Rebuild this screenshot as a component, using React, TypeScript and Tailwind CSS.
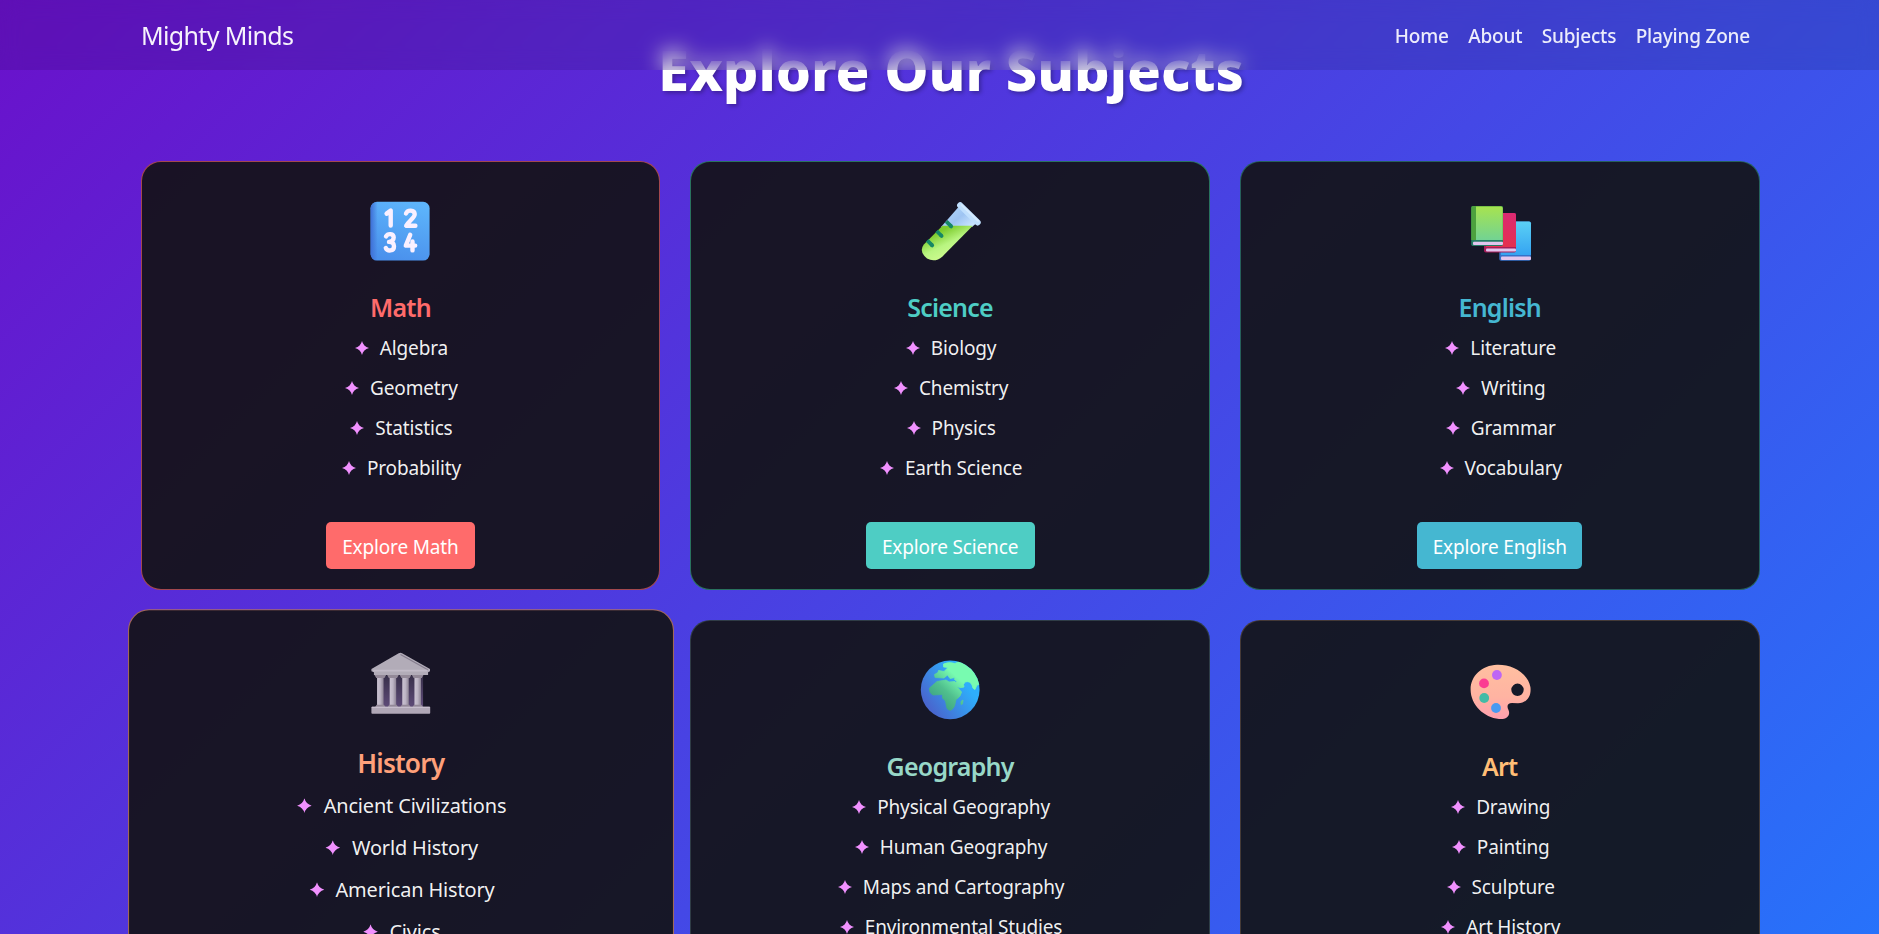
import React from "react";

const card = "rounded-[20px]";

function MathIcon() {
  return (
    <svg viewBox="0 0 60 60" className="h-[60px] w-[60px]">
      <defs>
        <linearGradient id="m1" x1="0.6" y1="0" x2="0.35" y2="1">
          <stop offset="0" stopColor="#5db4fb" />
          <stop offset="1" stopColor="#4a90ec" />
        </linearGradient>
        <linearGradient id="m2" x1="0" y1="0" x2="1" y2="0">
          <stop offset="0" stopColor="#3f6fd6" />
          <stop offset="0.12" stopColor="#3f6fd6" stopOpacity="0" />
        </linearGradient>
      </defs>
      <rect x="0.6" y="0.8" width="59" height="58.8" rx="6.5" fill="url(#m1)" />
      <rect x="0.6" y="0.8" width="59" height="58.8" rx="6.5" fill="url(#m2)" />
      <g fill="none" stroke="#faf0ff" strokeWidth="4.4" strokeLinecap="round" strokeLinejoin="round">
        <path d="M16.6 12.6 L20.7 9.6 V24.6" />
        <path d="M36 12.5 C37.5 8.6 44.5 8.6 44.7 13.2 C44.8 17 38.5 20 36.2 24.7 H45.4" />
        <path d="M16 35.4 C18 31.9 23.7 32.6 23.7 36.6 C23.7 39.6 21.5 40.9 19 40.9 C22 40.9 24 42.2 24 45.2 C24 50.4 17.5 50.6 15.8 47" />
        <path d="M40.2 33.8 L35.8 44.6 H45.2 M42.5 40.5 V49.4" />
      </g>
    </svg>
  );
}

function ScienceIcon() {
  return (
    <svg viewBox="0 0 60 60" className="h-[60px] w-[60px] overflow-visible">
      <defs>
        <linearGradient id="s1" x1="0.3" y1="0.2" x2="0.7" y2="0.75">
          <stop offset="0" stopColor="#7ccb2c" />
          <stop offset="0.55" stopColor="#b9f581" />
          <stop offset="1" stopColor="#cdfb8e" />
        </linearGradient>
        <linearGradient id="s2" x1="0" y1="0" x2="1" y2="0.7">
          <stop offset="0" stopColor="#b5dcff" />
          <stop offset="0.6" stopColor="#9ec4f2" />
          <stop offset="1" stopColor="#c6e3ff" />
        </linearGradient>
      </defs>
      <path d="M38.5 6 L56 22.5 L52 26 H21 Z" fill="url(#s2)" />
      <path d="M22.5 24.8 H52.8 L22.5 55.4 Q15 62 7 57.5 Q-1.5 50.5 3.8 43.5 Z" fill="url(#s1)" />
      <path d="M40.2 4.4 L57.6 21.4" stroke="#bfdffd" strokeWidth="6.2" strokeLinecap="round" />
      <path d="M41.6 4 L58 19.8" stroke="#d4eaff" strokeWidth="2" strokeLinecap="round" />
      <g stroke="#168765" strokeWidth="3.8">
        <path d="M26.2 20.4 L31.2 25.4 M16.6 30 L21.6 35 M7.2 39.4 L12.2 44.4" />
        <path d="M30.6 24.8 L31.2 25.4 M21 34.4 L21.6 35 M11.6 43.8 L12.2 44.4" strokeLinecap="round" />
      </g>
    </svg>
  );
}

function EnglishIcon() {
  return (
    <svg viewBox="0 0 60 60" className="h-[60px] w-[60px] overflow-visible">
      <defs>
        <linearGradient id="e1" x1="0" y1="0" x2="0" y2="1"><stop stopColor="#a7e34f" /><stop offset="1" stopColor="#72d393" /></linearGradient>
        <linearGradient id="e2" x1="0" y1="0" x2="0" y2="1"><stop stopColor="#db2a72" /><stop offset="1" stopColor="#e4304f" /></linearGradient>
        <linearGradient id="e3" x1="0" y1="0" x2="0" y2="1"><stop stopColor="#5bd0f5" /><stop offset="1" stopColor="#35a4f2" /></linearGradient>
      </defs>
      <rect x="29.3" y="20.4" width="31.6" height="39.4" rx="1.8" fill="#3671c9" />
      <path d="M31 20.4 H59 Q61 20.4 61 22.4 V54 H31 Z" fill="url(#e3)" />
      <rect x="31" y="55.6" width="30" height="3.4" rx="1" fill="#e2c5ee" />
      <rect x="14" y="12" width="32" height="39.6" rx="1.8" fill="#a51d59" />
      <path d="M16 12 H44 Q46 12 46 14 V46 H16 Z" fill="url(#e2)" />
      <rect x="16" y="47.4" width="30" height="3.2" rx="1" fill="#e2c5ee" />
      <rect x="1.2" y="5" width="31.8" height="40" rx="1.8" fill="#247b63" />
      <path d="M3 5 H31 Q33 5 33 7 V39 H1.2 V7 Q1.2 5 3 5" fill="#4da13e" />
      <path d="M6 5.4 H31 Q32.7 5.4 32.7 7.4 V39 H6 Z" fill="url(#e1)" />
      <rect x="3" y="40.8" width="30" height="3.2" rx="1" fill="#e2c5ee" />
    </svg>
  );
}

function HistoryIcon() {
  const columns = [7.2, 19.2, 31.2, 42.8];
  return (
    <svg viewBox="0 0 60 60" className="h-[60px] w-[60px]">
      <defs>
        <linearGradient id="h1" x1="0" y1="0" x2="1" y2="0"><stop stopColor="#cbc3d2" /><stop offset="0.5" stopColor="#bcb4c4" /><stop offset="1" stopColor="#8d8395" /></linearGradient>
        <linearGradient id="h2" x1="0" y1="0" x2="0" y2="1"><stop stopColor="#38304a" /><stop offset="1" stopColor="#5e4b78" /></linearGradient>
      </defs>
      <rect x="9" y="23" width="42" height="30" fill="url(#h2)" />
      {columns.map((x) => (
        <g key={x}>
          <rect x={x} y="24" width="6.2" height="29" fill="url(#h1)" />
          <path d={`M${x - 2.4} 22.5 h11 l-1.6 3 h-7.8 z M${x - 2} 53.3 l1.6 -2.4 h7 l1.6 2.4 z`} fill="#938998" />
        </g>
      ))}
      <path d="M1.8 16.8 L27.8 1.8 Q29.4 1 31 1.8 L57.6 16.8 V19 L55.8 20 V22.5 H4.2 V20 L1.8 19 Z" fill="#b2acb8" />
      <path d="M29.5 3 L55.5 17.6" stroke="#857d8e" strokeWidth="1" />
      <path d="M3.5 18.5 H55" stroke="#c2bbc8" strokeWidth="1.6" />
      <rect x="1.8" y="52.8" width="56" height="6.6" rx="0.8" fill="#b0a7b6" />
      <path d="M2.2 53.5 H57.4" stroke="#c6bdcc" strokeWidth="1.2" />
    </svg>
  );
}

function GeographyIcon() {
  return (
    <svg viewBox="0 0 60 60" className="h-[60px] w-[60px]">
      <defs>
        <linearGradient id="g1" x1="0.85" y1="0.3" x2="0.15" y2="0.8"><stop offset="0.15" stopColor="#2eaefb" /><stop offset="1" stopColor="#4867cf" /></linearGradient>
        <linearGradient id="g2" gradientUnits="userSpaceOnUse" x1="50" y1="8" x2="16" y2="46"><stop offset="0.3" stopColor="#78fbb0" /><stop offset="0.65" stopColor="#50bf8e" /><stop offset="1" stopColor="#3a9f80" /></linearGradient>
        <clipPath id="gc"><circle cx="30.2" cy="29.8" r="29.4" /></clipPath>
      </defs>
      <circle cx="30.2" cy="29.8" r="29.4" fill="url(#g1)" />
      <g clipPath="url(#gc)" fill="url(#g2)" stroke="url(#g2)" strokeWidth="0.8" strokeLinejoin="round">
        <path d="M23.5 4 Q29 1.5 35 3.5 L42 0 L61 10 V24 L57 25 L55 29.5 Q52.5 29 52 25 Q50 20.5 45 22 L43.5 24.5 L44 27 Q39.5 29 36 26 Q33.5 23 37 21.5 L34.5 19.5 L35 17.5 L30 18.5 L27.5 15 L24 18 L15 17.5 L14.5 14.5 L18 12.5 L18.5 10.5 L24 11.5 L28 7.5 L23.5 7 Z" />
        <path d="M17 21.5 L26 20 L29 22 L35 21.5 L37.5 27.5 L41.5 32 Q41 36.5 36 39.5 L34.5 46 Q31 53 27 48.5 L25.5 41 L22.5 38 V34.5 L13 35 Q9 33 9.5 28 Z" />
        <path d="M41 41.5 L43 40 L42.5 44 L41 44.5 Z" />
      </g>
    </svg>
  );
}

function ArtIcon() {
  return (
    <svg viewBox="0 0 60 60" className="h-[60px] w-[60px] overflow-visible">
      <defs>
        <linearGradient id="a1" x1="0.4" y1="0" x2="0.4" y2="1"><stop stopColor="#ffbfa0" /><stop offset="0.6" stopColor="#ffb3a2" /><stop offset="1" stopColor="#ff9fae" /></linearGradient>
      </defs>
      <path fillRule="evenodd" fill="url(#a1)" d="M27 4.8 C42 4.3 58 13 60.4 27 C61.6 36 57 43.2 48 43.2 L42 43 C37.5 43 36.5 46 38.5 50 C41 56 36 59.8 29 59 C14 57.5 .7 45 .6 29.5 C.6 16 12 5.3 27 4.8 Z M47.5 23.6 A6.2 6.2 0 1 0 47.5 36 A6.2 6.2 0 1 0 47.5 23.6 Z" />
      <circle cx="26.9" cy="15" r="4.9" fill="#be66f4" />
      <circle cx="14" cy="23.4" r="4.9" fill="#fb3d92" />
      <circle cx="14.2" cy="38" r="4.9" fill="#43bba6" />
      <circle cx="26" cy="48" r="4.9" fill="#489af2" />
    </svg>
  );
}

const subjects = [
  { name: "Math", topics: ["Algebra", "Geometry", "Statistics", "Probability"], icon: <MathIcon />, text: "text-[#ff6b6b]", button: "bg-[#ff6b6b]", width: "w-[149px]", border: "border-[#ff6b6b]/60" },
  { name: "Science", topics: ["Biology", "Chemistry", "Physics", "Earth Science"], icon: <ScienceIcon />, text: "text-[#4ecdc4]", button: "bg-[#4ecdc4]", width: "w-[169px]", border: "border-[#35b184]/60" },
  { name: "English", topics: ["Literature", "Writing", "Grammar", "Vocabulary"], icon: <EnglishIcon />, text: "text-[#45b7d1]", button: "bg-[#45b7d1]", width: "w-[165px]", border: "border-[#35a890]/50" },
  { name: "History", topics: ["Ancient Civilizations", "World History", "American History", "Civics"], icon: <HistoryIcon />, text: "text-[#ffa07a]", button: "bg-[#ffa07a]", width: "w-[165px]", border: "border-[#ffa07a]/60", raised: true },
  { name: "Geography", topics: ["Physical Geography", "Human Geography", "Maps and Cartography", "Environmental Studies"], icon: <GeographyIcon />, text: "text-[#98d8c8]", button: "bg-[#98d8c8]", width: "w-[195px]", border: "border-[#98d8c8]/20" },
  { name: "Art", topics: ["Drawing", "Painting", "Sculpture", "Art History"], icon: <ArtIcon />, text: "text-[#ffbe76]", button: "bg-[#ffbe76]", width: "w-[130px]", border: "border-[#ffbe76]/20" },
];

function Star() {
  return (
    <svg viewBox="0 0 14 14" className="mr-[11px] h-[14px] w-[14px] shrink-0" fill="#f191ff">
      <path d="M7 0 Q8.3 5.4 14 7 Q8.3 8.6 7 14 Q5.7 8.6 0 7 Q5.7 5.4 7 0 Z" />
    </svg>
  );
}

export default function App() {
  return (
    <div className="h-[934px] w-full overflow-hidden bg-[linear-gradient(135deg,#6a11cb_0%,#2575fc_103%)] font-['Noto_Sans','Open_Sans',sans-serif] text-white">
      <nav className="fixed inset-x-0 top-0 z-20 flex h-[70px] items-center justify-between bg-black/10 pt-[2px] pr-[129px] pl-[141px] backdrop-blur-[10px]">
        <span className="text-[25px] tracking-[-0.65px] text-white/95">Mighty Minds</span>
        <div className="flex gap-[19.5px] text-[19px] font-medium tracking-[-0.2px] text-white/90">
          <a>Home</a>
          <a>About</a>
          <a>Subjects</a>
          <a>Playing Zone</a>
        </div>
      </nav>
      <main className="ml-[140.6px] w-[1619px] pt-[33px]">
        <h1 className="h-[128px] pl-[2px] text-center text-[56px] leading-[72px] font-extrabold whitespace-nowrap [text-shadow:2px_2px_4px_rgba(0,0,0,0.3)]">
          Explore Our Subjects
        </h1>
        <div className="grid grid-cols-3 gap-x-[30px] gap-y-[30px]">
          {subjects.map((s) => (
            <section key={s.name} className={`flex h-[429px] flex-col items-center border bg-[#121212]/90 bg-clip-border pt-[38.5px] ${card} ${s.border} ${s.raised ? "scale-105" : ""}`}>
              {s.icon}
              <h2 className={`mt-[26.5px] mb-px text-[25px] leading-[40px] font-semibold tracking-[-0.8px] ${s.text}`}>{s.name}</h2>
              <ul className="pl-[2px]">
                {s.topics.map((t) => (
                  <li key={t} className="flex h-10 items-center justify-center text-[19px] tracking-[-0.15px] text-white/95">
                    <Star />
                    {t}
                  </li>
                ))}
              </ul>
              <button className={`mt-[34px] h-[47px] rounded-[5px] pt-[4px] text-[19px] tracking-[-0.15px] ${s.button} ${s.width}`}>Explore {s.name}</button>
            </section>
          ))}
        </div>
      </main>
    </div>
  );
}
